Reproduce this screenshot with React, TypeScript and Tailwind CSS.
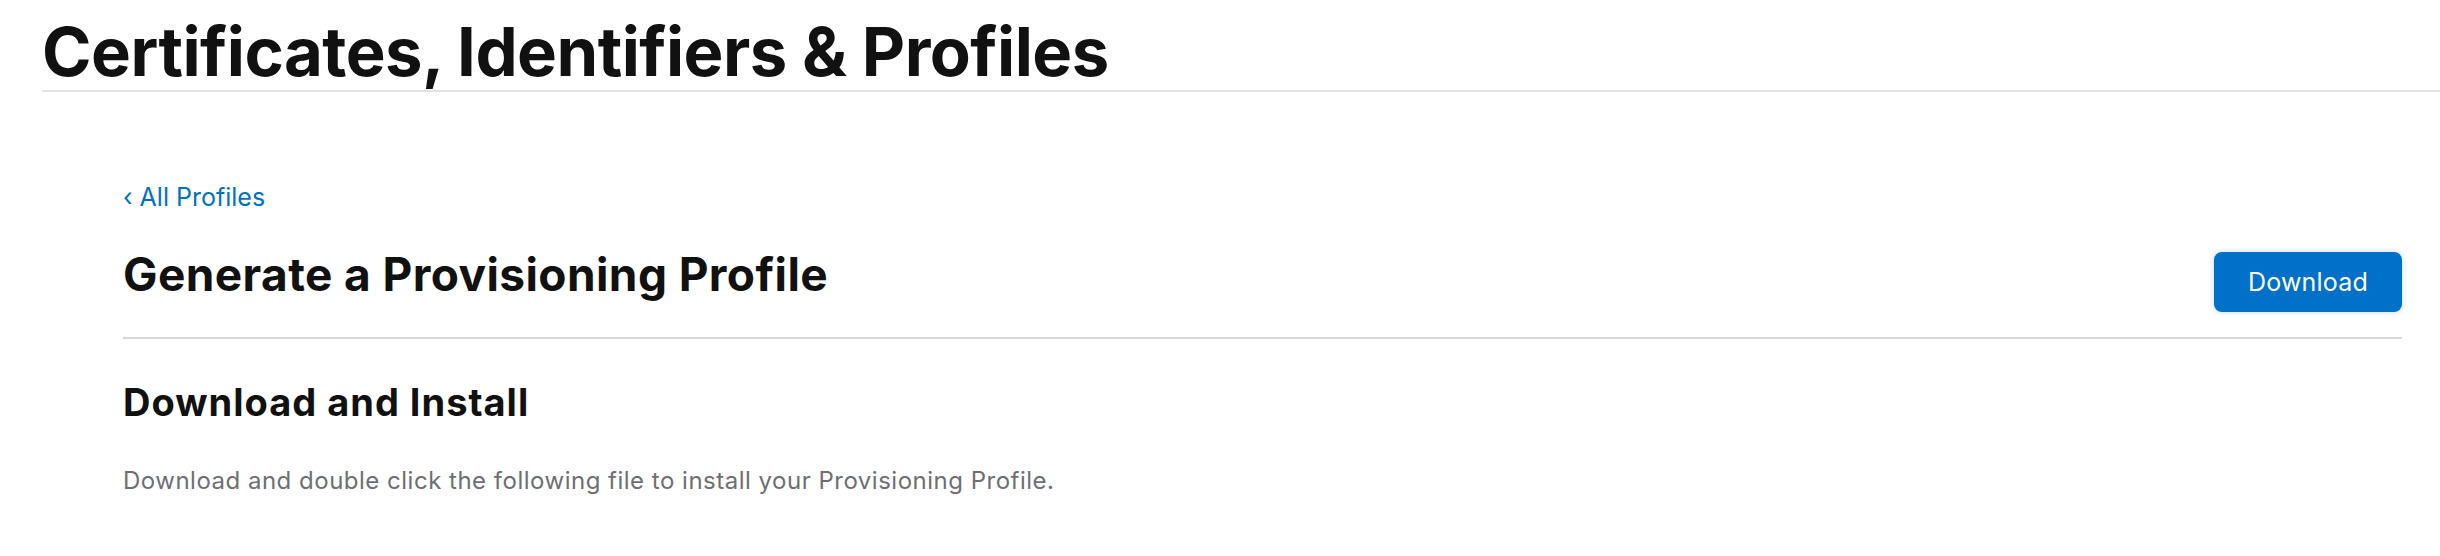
export default function App() {
  return (
    <div className="min-h-[556px] bg-white text-[#1d1d1f]" style={{ fontFamily: 'Inter, "Noto Sans", sans-serif' }}>
      <header className="ml-[42px] border-b-2 border-[#e3e3e3] pt-[18px] pb-[5px]">
        <h1 className="text-[67px] font-bold leading-none tracking-[-0.008em] text-[#111111]">
          Certificates, Identifiers &amp; Profiles
        </h1>
      </header>

      <main className="pl-[123px] pr-[38px]">
        <a href="#" className="mt-[93px] flex items-center gap-[7px] text-[25px] leading-none text-[#0070c9]">
          <span className="text-[25px] leading-none">‹</span>
          <span>All Profiles</span>
        </a>

        <div className="mt-[41px] flex items-start justify-between border-b-2 border-[#d6d6d6] pb-[25px]">
          <h2 className="text-[46px] font-bold leading-none tracking-[0.4px] text-[#111111]">
            Generate a Provisioning Profile
          </h2>
          <button
            type="button"
            className="mt-[1px] h-[60px] w-[188px] rounded-[8px] bg-[#0070c9] text-[25px] leading-none tracking-[0.2px] text-white shadow-[0_0_4px_2px_rgba(0,125,250,0.15)]"
          >
            Download
          </button>
        </div>

        <h3 className="mt-[44px] text-[38px] font-bold leading-none tracking-[1px] text-[#111111]">
          Download and Install
        </h3>
        <p className="mt-[48px] text-[24px] leading-none tracking-[0.5px] text-[#6e6e73]">
          Download and double click the following file to install your Provisioning Profile.
        </p>
      </main>
    </div>
  );
}
